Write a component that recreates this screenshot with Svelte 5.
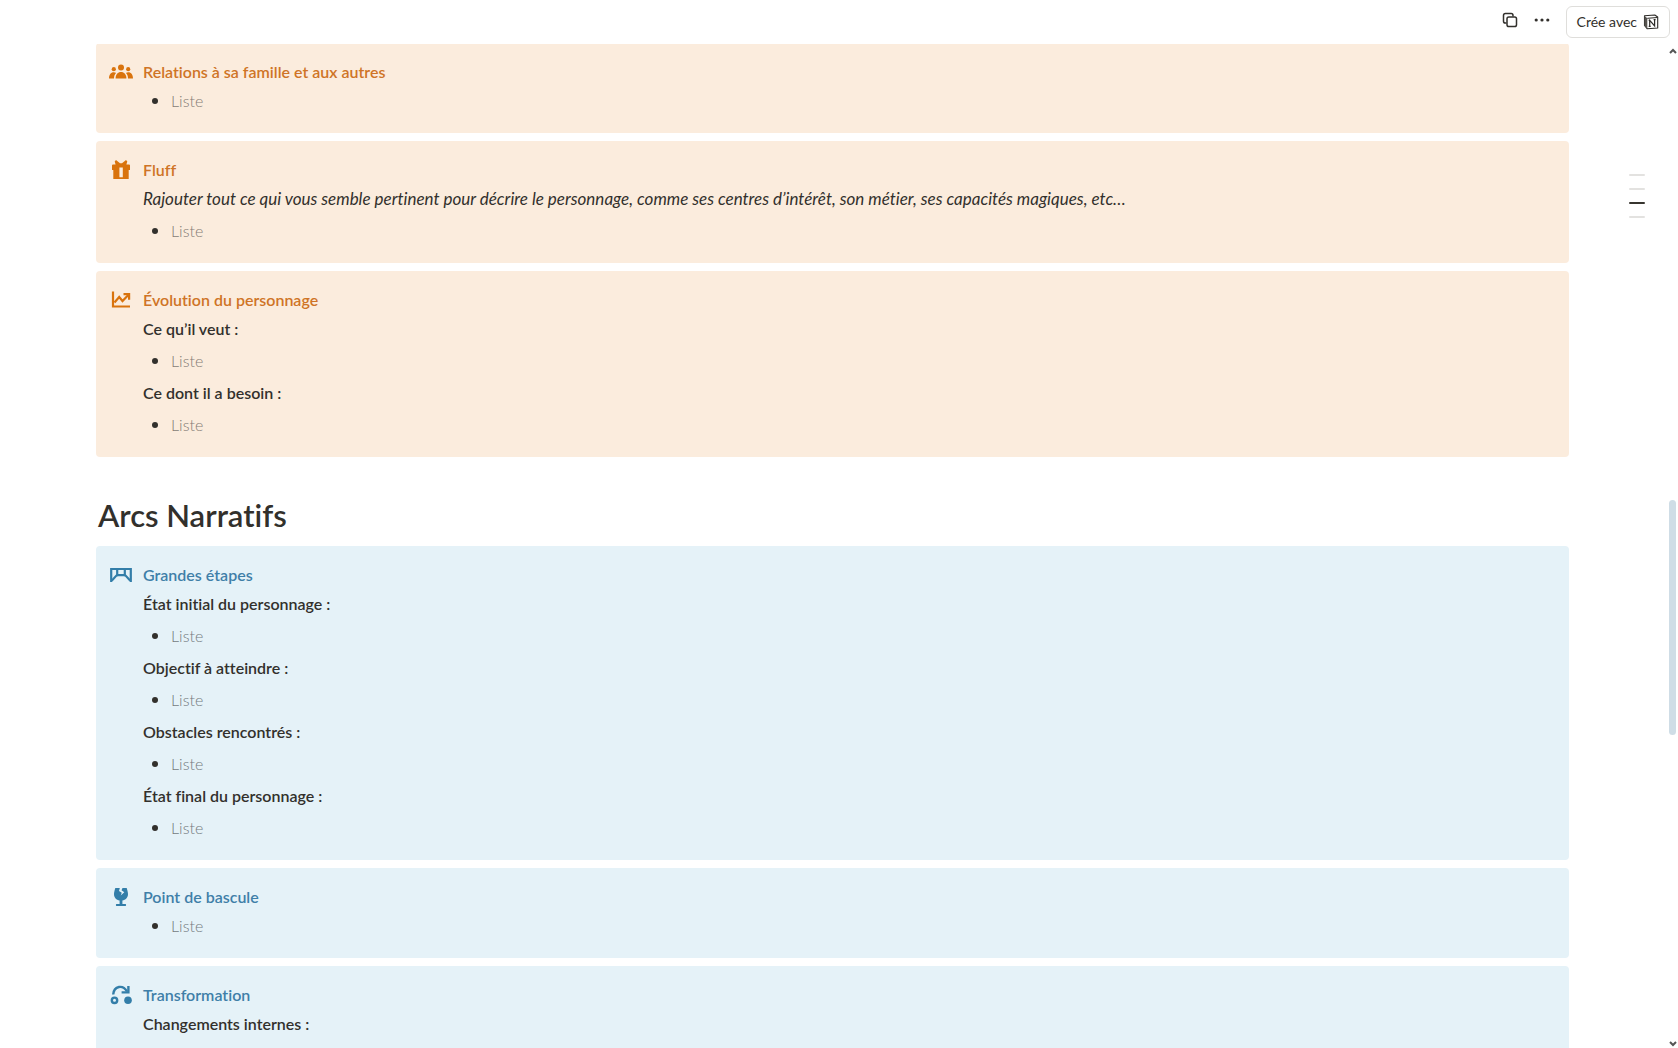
<script>
  const sections = [
    {
      id: 'personnage',
      color: 'orange',
      callouts: [
        {
          icon: 'people',
          title: 'Relations à sa famille et aux autres',
          blocks: [{ type: 'list' }]
        },
        {
          icon: 'gift',
          title: 'Fluff',
          blocks: [
            {
              type: 'note',
              text: 'Rajouter tout ce qui vous semble pertinent pour décrire le personnage, comme ses centres d’intérêt, son métier, ses capacités magiques, etc…'
            },
            { type: 'list' }
          ]
        },
        {
          icon: 'chart',
          title: 'Évolution du personnage',
          blocks: [
            { type: 'label', text: 'Ce qu’il veut :' },
            { type: 'list' },
            { type: 'label', text: 'Ce dont il a besoin :' },
            { type: 'list' }
          ]
        }
      ]
    },
    {
      id: 'arcs',
      heading: 'Arcs Narratifs',
      color: 'blue',
      callouts: [
        {
          icon: 'bridge',
          title: 'Grandes étapes',
          blocks: [
            { type: 'label', text: 'État initial du personnage :' },
            { type: 'list' },
            { type: 'label', text: 'Objectif à atteindre :' },
            { type: 'list' },
            { type: 'label', text: 'Obstacles rencontrés :' },
            { type: 'list' },
            { type: 'label', text: 'État final du personnage :' },
            { type: 'list' }
          ]
        },
        {
          icon: 'glass',
          title: 'Point de bascule',
          blocks: [{ type: 'list' }]
        },
        {
          icon: 'transform',
          title: 'Transformation',
          blocks: [{ type: 'label', text: 'Changements internes :' }]
        }
      ]
    }
  ];

  const outline = [0, 1, 2, 3];
  let current = $state(2);
</script>

{#snippet icon(name)}
  <svg class="icon" viewBox="0 0 24 24" fill="currentColor" aria-hidden="true">
    {#if name === 'people'}
      <circle cx="12" cy="7.6" r="3" />
      <circle cx="4.8" cy="9.2" r="2.1" />
      <circle cx="19.2" cy="9.2" r="2.1" />
      <path d="M6.6 18.500c0-3.700 2.200-6.400 5.400-6.400s5.400 2.700 5.400 6.400z" />
      <path d="M0 18.500c0-3.600 1.800-6.200 4.700-6.200 1 0 1.800.3 2.400.8C5.800 14.400 5 16.300 5 18.500z" />
      <path d="M24 18.500c0-3.600-1.800-6.200-4.700-6.200-1 0-1.800.3-2.400.8C18.200 14.400 19 16.300 19 18.500z" />
    {:else if name === 'gift'}
      <path
        fill-rule="evenodd"
        d="M7 2 11 5.200h2L17 2l1.300 1.400L17.400 6.500H20q1 0 1 1V12h-1.300v9H4.300v-9H3V7.500q0-1 1-1h2.600L5.700 3.400zM10.400 9.500v9.700h3.400V9.500z"
      />
    {:else if name === 'chart'}
      <g fill="none" stroke="currentColor" stroke-width="2.200">
        <path d="M4 3.500v15h17" />
        <path d="m5.500 14.500 4.700-5.500 3.300 4 5.800-6" />
        <path d="M14.500 6.200h5.600v5.600" />
      </g>
    {:else if name === 'bridge'}
      <g fill="none" stroke="currentColor" stroke-width="2.200">
        <path d="M2.200 19V6h19.600v13" />
        <path d="M2.400 17.600C5.200 16.400 6 12.200 9 12.200h6c3 0 3.800 4.200 6.600 5.400" />
        <path d="M8.200 6v6.500M15.800 6v6.500" />
      </g>
    {:else if name === 'glass'}
      <path
        fill-rule="evenodd"
        d="M6.300 3h4.500l-.8 3 2.800 1.800-1.100 2.700 3.600-3.300-2.800-1.900 1-2.300h4.200c.9 3 1.300 4.700 1.300 6.200 0 3.400-2.400 5.800-5.600 6.300V19h3.100c.8 0 .8 2 0 2h-9c-.8 0-.8-2 0-2h3.100v-3.500C7.400 15 5 12.600 5 9.200 5 7.700 5.400 6 6.300 3z"
      />
    {:else if name === 'transform'}
      <g fill="none" stroke="currentColor" stroke-width="2.400">
        <path d="M4.200 11.500C5 2.500 14 1.500 18 8.500" />
        <path d="M19.400 3V9.400h-6.800" />
        <circle cx="5.500" cy="17.300" r="2.700" />
      </g>
      <circle cx="19" cy="17.300" r="3.800" />
    {/if}
  </svg>
{/snippet}

<div class="page">
  <header class="topbar">
    <button class="icon-button" aria-label="Dupliquer">
      <svg viewBox="0 0 16 16" fill="none" stroke="currentColor" stroke-width="1.500">
        <rect x="5" y="5" width="9.500" height="9.500" rx="1.800" />
        <path d="M4.500 11H3.400Q1.500 11 1.500 9.200V3.400Q1.500 1.500 3.400 1.500h5.800Q11 1.500 11 3.400V4.600" />
      </svg>
    </button>
    <button class="icon-button" aria-label="Plus d’options">
      <svg viewBox="0 0 16 16" fill="currentColor">
        <circle cx="2.200" cy="8" r="1.600" />
        <circle cx="8" cy="8" r="1.600" />
        <circle cx="13.800" cy="8" r="1.600" />
      </svg>
    </button>
    <button class="made-with">
      Crée avec
      <svg viewBox="0 0 16 16" aria-hidden="true">
        <path d="M1.500 1.700 11.800 1l2.900 2v11L4.300 14.800 1.500 11.500z" fill="#fff" stroke="#2c2a27" stroke-width="1.100" stroke-linejoin="round" />
        <path d="m1.500 1.700 2.800 2.500v10.500L1.500 11.500z" fill="#55524e" />
        <path d="m4.300 4.300 10.300-.8" stroke="#2c2a27" />
        <path d="M6.700 12.500V6.300l4.900 5.600V5.500M5.700 6.300h1.600M5.700 12.400h2M10.600 5.600h2" fill="none" stroke="#2c2a27" stroke-width="1.200" />
      </svg>
    </button>
  </header>

  <div class="body">
    <main>
      {#each sections as section (section.id)}
        <section class={section.color}>
          {#if section.heading}
            <h1>{section.heading}</h1>
          {/if}
          {#each section.callouts as callout (callout.title)}
            <article class="callout">
              {@render icon(callout.icon)}
              <div class="content">
                <h2>{callout.title}</h2>
                {#each callout.blocks as block}
                  {#if block.type === 'list'}
                    <ul><li>Liste</li></ul>
                  {:else}
                    <p class={block.type}>{block.text}</p>
                  {/if}
                {/each}
              </div>
            </article>
          {/each}
        </section>
      {/each}
    </main>

    <nav class="outline" aria-label="Sommaire">
      {#each outline as i}
        <button
          class:active={current === i}
          aria-label="Section {i + 1}"
          onclick={() => (current = i)}
        ></button>
      {/each}
    </nav>

    <div class="scrollbar" aria-hidden="true">
      <svg viewBox="0 0 8 6"><path d="m1 5 3-3 3 3" /></svg>
      <div class="track"><div class="thumb"></div></div>
      <svg viewBox="0 0 8 6"><path d="m1 1 3 3 3-3" /></svg>
    </div>
  </div>
</div>

<style>
  :global(body) {
    background: #fff;
    color: #32302c;
    font-family: Lato, 'Open Sans', sans-serif;
    font-size: 16px;
    font-variant-ligatures: none;
    line-height: 24px;
  }

  button {
    padding: 0;
    border: 0;
    background: none;
    color: inherit;
    font: inherit;
    cursor: pointer;
  }

  .page {
    display: flex;
    flex-direction: column;
    height: 100vh;
    overflow: hidden;
  }

  .topbar {
    display: flex;
    flex: none;
    align-items: center;
    justify-content: flex-end;
    gap: 16px;
    height: 44px;
    padding-right: 8px;
    box-sizing: border-box;
  }

  .icon-button {
    display: flex;
    padding-bottom: 4px;
  }

  .icon-button svg {
    width: 16px;
    height: 16px;
  }

  .made-with {
    display: flex;
    align-items: center;
    gap: 6px;
    height: 32px;
    padding: 0 10px;
    border: 1px solid #dfdedb;
    border-radius: 6px;
    font-size: 14px;
  }

  .made-with svg {
    width: 16px;
    height: 16px;
  }

  .body {
    display: flex;
    flex: 1;
    min-height: 0;
  }

  main {
    flex: 1;
    min-width: 0;
    padding-left: 96px;
    overflow: hidden;
  }

  section {
    display: flex;
    flex-direction: column;
    gap: 8px;
  }

  /* the page is scrolled just past the top edge of the first callout */
  section:first-child {
    margin-top: -1px;
  }

  h1 {
    margin: 39px 2px 3px;
    font-size: 31px;
    font-weight: 600;
    line-height: 39px;
  }

  .callout {
    display: flex;
    gap: 10px;
    padding: 16px 13px;
    border-radius: 4px;
  }

  .orange .callout {
    background: #fbecdd;
  }

  .blue .callout {
    background: #e5f2f8;
  }

  .orange .icon {
    color: #d9730d;
  }

  .orange h2 {
    color: #cf7426;
  }

  .blue .icon {
    color: #337ea9;
  }

  .blue h2 {
    color: #3f7fa8;
  }

  .icon {
    flex: none;
    width: 24px;
    height: 24px;
    margin-top: 1px;
  }

  .content {
    flex: 1;
    min-width: 0;
  }

  h2 {
    margin: 0;
    font-size: 16px;
    font-weight: 600;
    line-height: 26px;
  }

  p,
  ul {
    margin: 0;
    padding: 4px 0;
  }

  .label {
    font-weight: 600;
  }

  .note {
    font-size: 17px;
    font-style: italic;
  }

  ul {
    padding-left: 9px;
    list-style: none;
  }

  li {
    display: flex;
    align-items: center;
    gap: 13px;
    color: #857c75;
    font-weight: 300;
  }

  .blue li {
    color: #747b7e;
  }

  li::before {
    width: 6px;
    height: 6px;
    border-radius: 50%;
    background: #32302c;
    content: '';
  }

  .outline {
    display: flex;
    flex: none;
    flex-direction: column;
    align-items: flex-end;
    width: 76px;
    padding: 124px 24px 0 0;
  }

  .outline button {
    width: 16px;
    height: 14px;
  }

  .outline button::before {
    display: block;
    height: 2px;
    border-radius: 1px;
    background: #e3e2e0;
    content: '';
  }

  .outline button.active::before {
    background: #37352f;
  }

  .scrollbar {
    display: flex;
    flex: none;
    flex-direction: column;
    width: 9px;
    padding: 4px 0 1px;
    box-sizing: border-box;
  }

  .scrollbar svg {
    width: 8px;
    height: 6px;
    fill: none;
    stroke: #555;
    stroke-width: 2;
  }

  .track {
    display: flex;
    flex: 1;
    flex-direction: column;
  }

  .track::before {
    flex: 0 0 45.2%;
    content: '';
  }

  .thumb {
    flex: 0 0 23.8%;
    width: 7px;
    border-radius: 4px;
    background: #cfdde6;
  }
</style>
